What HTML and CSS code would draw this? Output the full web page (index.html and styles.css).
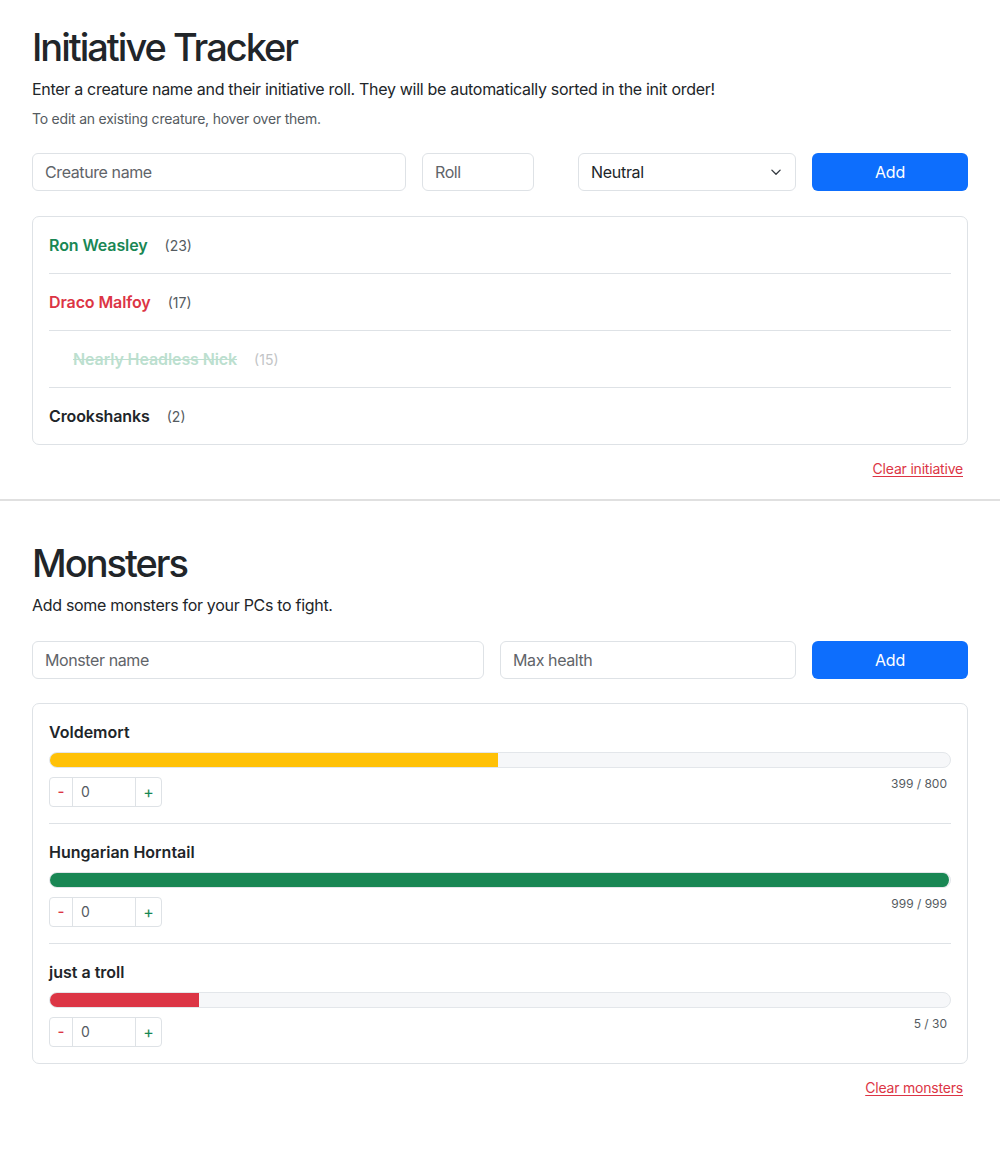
FILE: index.html
```html
<!DOCTYPE html>
<html lang="en">
<head>
<meta charset="utf-8">
<title>Initiative Tracker</title>
<link rel="stylesheet" href="styles.css">
</head>
<body>
<section class="section section-init">
  <h1 class="title">Initiative Tracker</h1>
  <p class="lead-text">Enter a creature name and their initiative roll. They will be automatically sorted in the init order!</p>
  <p class="hint">To edit an existing creature, hover over them.</p>
  <form class="form-row form-init">
    <input class="field" type="text" placeholder="Creature name">
    <input class="field" type="text" placeholder="Roll">
    <div class="select-wrap">
      <span class="select-value">Neutral</span>
      <svg class="chevron" width="12" height="12" viewBox="0 0 16 16"><path d="M2.5 5.5l5.5 5.5 5.5-5.5" fill="none" stroke="#343a40" stroke-width="1.8" stroke-linecap="round" stroke-linejoin="round"/></svg>
    </div>
    <button class="btn-add" type="button">Add</button>
  </form>
  <ul class="card init-list">
    <li class="init-item"><span class="name name-ally">Ron Weasley</span><span class="roll">(23)</span></li>
    <li class="init-item"><span class="name name-enemy">Draco Malfoy</span><span class="roll">(17)</span></li>
    <li class="init-item init-item-dead"><span class="name name-dead">Nearly Headless Nick</span><span class="roll roll-dead">(15)</span></li>
    <li class="init-item"><span class="name">Crookshanks</span><span class="roll">(2)</span></li>
  </ul>
  <div class="clear-row"><a class="clear-link" href="#">Clear initiative</a></div>
</section>
<section class="section section-monsters">
  <h1 class="title">Monsters</h1>
  <p class="lead-text">Add some monsters for your PCs to fight.</p>
  <form class="form-row form-monsters">
    <input class="field" type="text" placeholder="Monster name">
    <input class="field" type="text" placeholder="Max health">
    <button class="btn-add" type="button">Add</button>
  </form>
  <ul class="card monster-list">
    <li class="monster">
      <div class="monster-name">Voldemort</div>
      <div class="bar"><div class="bar-fill fill-warn" style="width:49.875%"></div></div>
      <div class="monster-controls">
        <div class="stepper"><span class="step step-minus">-</span><span class="step-value">0</span><span class="step step-plus">+</span></div>
        <span class="hp">399 / 800</span>
      </div>
    </li>
    <li class="monster">
      <div class="monster-name">Hungarian Horntail</div>
      <div class="bar"><div class="bar-fill fill-ok" style="width:100%"></div></div>
      <div class="monster-controls">
        <div class="stepper"><span class="step step-minus">-</span><span class="step-value">0</span><span class="step step-plus">+</span></div>
        <span class="hp">999 / 999</span>
      </div>
    </li>
    <li class="monster">
      <div class="monster-name">just a troll</div>
      <div class="bar"><div class="bar-fill fill-bad" style="width:16.667%"></div></div>
      <div class="monster-controls">
        <div class="stepper"><span class="step step-minus">-</span><span class="step-value">0</span><span class="step step-plus">+</span></div>
        <span class="hp">5 / 30</span>
      </div>
    </li>
  </ul>
  <div class="clear-row"><a class="clear-link" href="#">Clear monsters</a></div>
</section>
</body>
</html>
```
FILE: styles.css
```css
* { box-sizing: border-box; }
html, body { margin: 0; padding: 0; }
body {
  font-family: "Inter", "Noto Sans", "Liberation Sans", sans-serif;
  font-size: 16px;
  line-height: 1.5;
  color: #212529;
  background: #fff;
}
.section { padding: 0 32px; }
.section-init {
  padding-top: 25px;
  padding-bottom: 20px;
  border-bottom: 2px solid #e0e0e0;
}
.section-monsters { padding-top: 40px; }
.title {
  margin: 0 0 8px;
  font-size: 38px;
  font-weight: 500;
  line-height: 44px;
  letter-spacing: -2px;
}
.lead-text { margin: 0; font-size: 16px; line-height: 24px; letter-spacing: -0.3px; }
.hint { margin: 7px 0 0; font-size: 14px; line-height: 21px; color: #555b61; letter-spacing: -0.22px; }
.form-row {
  display: grid;
  column-gap: 16px;
  margin-top: 24px;
}
.form-init { grid-template-columns: 374px 112px 1fr 156px; }
.form-init .select-wrap { margin-left: 28px; }
.form-monsters { grid-template-columns: 452px 1fr 156px; }
.field {
  height: 38px;
  border: 1px solid #dee2e6;
  border-radius: 6px;
  padding: 0 12px;
  font: inherit;
  font-size: 16px;
  letter-spacing: -0.4px;
  color: #212529;
  background: #fff;
  min-width: 0;
}
.field::placeholder { color: #5f6469; }
.select-wrap {
  height: 38px;
  border: 1px solid #dee2e6;
  border-radius: 6px;
  padding: 0 13px 0 12px;
  display: flex;
  align-items: center;
  justify-content: space-between;
}
.select-value { font-size: 16px; letter-spacing: -0.3px; }
.btn-add {
  height: 38px;
  border: 0;
  border-radius: 6px;
  background: #0d6efd;
  color: #fff;
  font: inherit;
  font-size: 16px;
  letter-spacing: -0.2px;
}
.card {
  list-style: none;
  margin: 25px 0 0;
  padding: 0 16px;
  border: 1px solid #dee2e6;
  border-radius: 7px;
}
.init-item {
  height: 57px;
  display: flex;
  align-items: center;
  border-bottom: 1px solid #dee2e6;
}
.init-item:last-child { border-bottom: 0; height: 56px; }
.init-item-dead { padding-left: 24px; }
.name { font-weight: 600; font-size: 16px; letter-spacing: -0.1px; }
.name-ally { color: #198754; }
.name-enemy { color: #dc3545; }
.name-dead { color: #bcdfcf; text-decoration: line-through; }
.roll { margin-left: 17px; font-size: 14px; color: #555b61; }
.roll-dead { color: #c2c4c6; }
.clear-row {
  display: flex;
  justify-content: flex-end;
  padding: 13px 5px 0 0;
  font-size: 14px;
  line-height: 21px;
}
.clear-link { color: #dc3545; text-decoration: underline; text-underline-offset: 2px; letter-spacing: -0.2px; }
.monster-list { margin-top: 24px; }
.monster {
  padding: 16px 0 16px;
  border-bottom: 1px solid #dee2e6;
}
.monster:last-child { border-bottom: 0; }
.monster-name { font-weight: 600; font-size: 16px; line-height: 24px; }
.bar {
  margin-top: 8px;
  height: 16px;
  border: 1px solid #e3e6ea;
  border-radius: 8px;
  background: #f6f7f9;
  overflow: hidden;
}
.bar-fill { margin: -1px 0 0 -1px; height: 16px; border-radius: 8px 0 0 8px; }
.fill-warn { background: #ffc107; }
.fill-ok { background: #198754; border-radius: 8px; }
.fill-bad { background: #dc3545; }
.monster-controls {
  margin-top: 9px;
  display: flex;
  justify-content: space-between;
  align-items: flex-start;
}
.stepper {
  display: flex;
  height: 30px;
  border: 1px solid #dee2e6;
  border-radius: 4px;
  font-size: 14px;
  line-height: 28px;
}
.step {
  display: flex;
  align-items: center;
  justify-content: center;
}
.step-minus { width: 23px; color: #dc3545; border-right: 1px solid #dee2e6; font-size: 15px; font-weight: 500; }
.step-plus { width: 26px; color: #198754; border-left: 1px solid #dee2e6; font-size: 16px; }
.step-value { width: 62px; display: flex; align-items: center; padding-left: 8px; color: #555b61; }
.hp { font-size: 12px; color: #555b61; padding-right: 4px; line-height: 14px; }
```
